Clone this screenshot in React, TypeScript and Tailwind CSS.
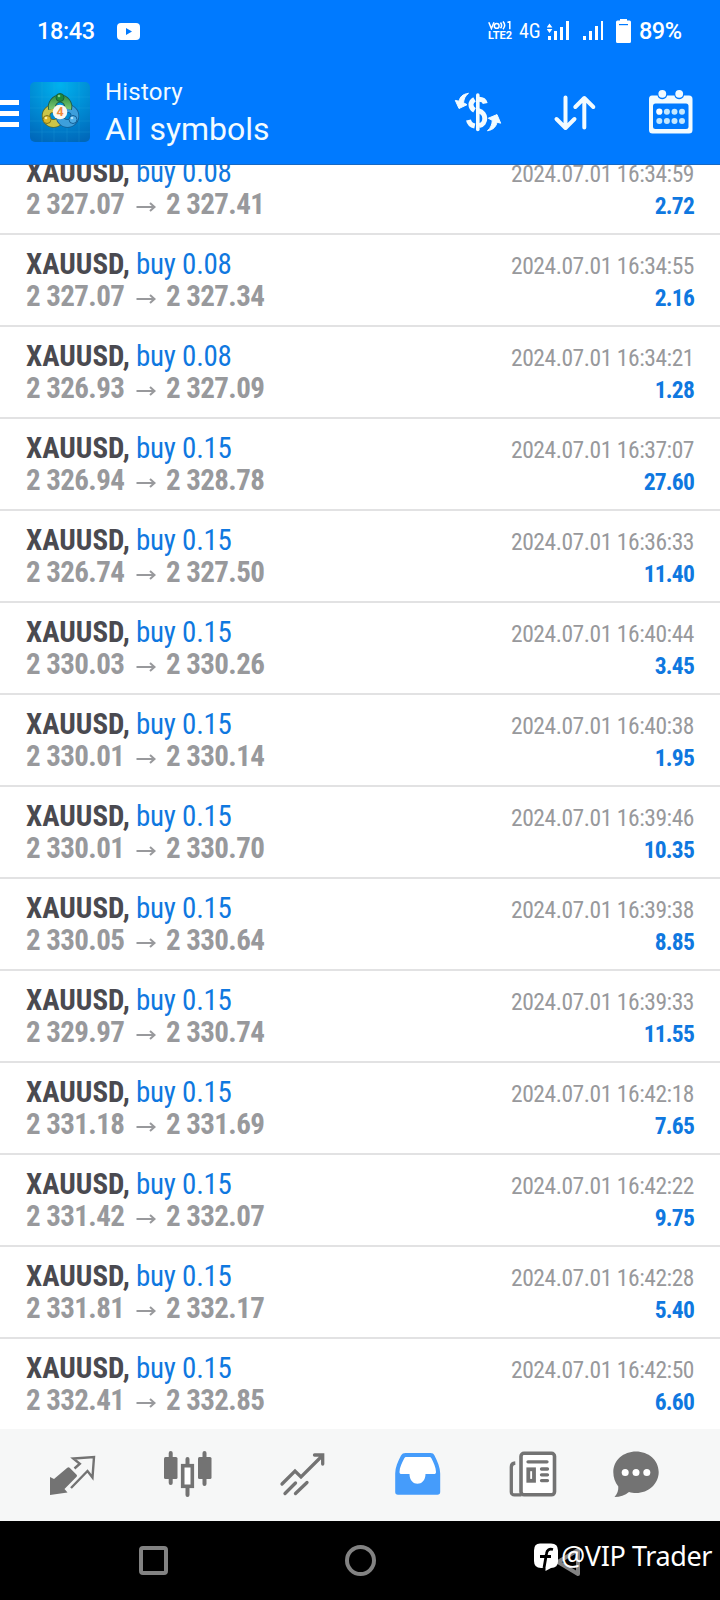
import type { ReactNode } from "react";

interface Deal {
  volume: string;
  open: string;
  close: string;
  time: string;
  profit: string;
}

const deals: Deal[] = [
  { volume: "0.08", open: "2 327.07", close: "2 327.41", time: "16:34:59", profit: "2.72" },
  { volume: "0.08", open: "2 327.07", close: "2 327.34", time: "16:34:55", profit: "2.16" },
  { volume: "0.08", open: "2 326.93", close: "2 327.09", time: "16:34:21", profit: "1.28" },
  { volume: "0.15", open: "2 326.94", close: "2 328.78", time: "16:37:07", profit: "27.60" },
  { volume: "0.15", open: "2 326.74", close: "2 327.50", time: "16:36:33", profit: "11.40" },
  { volume: "0.15", open: "2 330.03", close: "2 330.26", time: "16:40:44", profit: "3.45" },
  { volume: "0.15", open: "2 330.01", close: "2 330.14", time: "16:40:38", profit: "1.95" },
  { volume: "0.15", open: "2 330.01", close: "2 330.70", time: "16:39:46", profit: "10.35" },
  { volume: "0.15", open: "2 330.05", close: "2 330.64", time: "16:39:38", profit: "8.85" },
  { volume: "0.15", open: "2 329.97", close: "2 330.74", time: "16:39:33", profit: "11.55" },
  { volume: "0.15", open: "2 331.18", close: "2 331.69", time: "16:42:18", profit: "7.65" },
  { volume: "0.15", open: "2 331.42", close: "2 332.07", time: "16:42:22", profit: "9.75" },
  { volume: "0.15", open: "2 331.81", close: "2 332.17", time: "16:42:28", profit: "5.40" },
  { volume: "0.15", open: "2 332.41", close: "2 332.85", time: "16:42:50", profit: "6.60" },
];

function StatusBar() {
  return (
    <div className="flex h-[62px] items-center pl-[37px] text-white">
      <span className="w-[80px] text-[23.5px] font-medium leading-[62px] tracking-[-0.4px]">18:43</span>
      <svg className="h-[17px] w-[23px]" viewBox="0 0 23 17">
        <rect width="23" height="17" rx="4" fill="#fff" />
        <path d="M9 5v7l6-3.5z" fill="#007aff" />
      </svg>
      <div className="ml-[348px] flex w-[25px] flex-col">
        <svg className="h-[9px] w-[25px]" viewBox="0 0 25 9" fill="none" stroke="#fff" strokeWidth="1.5">
          <path d="M.8 1.2 3.4 7.6 6 1.2M12.5 1.5q2.2 2.9 0 5.8M15 .4q3.4 3.9 0 7.8M19.4 1.4l2.4-.8v7.6" />
          <circle cx="8.7" cy="4.9" r="2.4" />
        </svg>
        <span className="text-[11px] font-bold leading-[12px]">LTE2</span>
      </div>
      <span className="ml-[6px] w-[28px] text-[20px] leading-[60px] [font-stretch:78%]">4G</span>
      <svg className="h-[20px] w-[56px]" viewBox="0 0 56 20" fill="#fff">
        <path d="M2.5 2.5 5.4 6.5H-.4zM2.5 12 5.4 8H-.4z" />
        <path d="M1 15h3v4H1zM7 10h3v9H7zM13 6h3v13h-3zM19 0h3v19h-3z" />
        <path d="M36 15h3v4h-3zM42 10h3v9h-3zM48 5h3v14h-3zM54 0h3v19h-3z" />
      </svg>
      <svg className="ml-[13px] h-[24px] w-[15px]" viewBox="0 0 15 24">
        <path d="M4 0h7v1.5h2.5A1.5 1.5 0 0 1 15 3v19.5a1.5 1.5 0 0 1-1.5 1.5h-12A1.5 1.5 0 0 1 0 22.5V3a1.5 1.5 0 0 1 1.5-1.5H4z" fill="#fff" />
        <path d="M3 5h9v1.2H3z" fill="#007aff" />
      </svg>
      <span className="ml-[8px] text-[23.5px] font-medium leading-[62px] tracking-[-0.5px]">89%</span>
    </div>
  );
}

function AppLogo() {
  return (
    <svg className="ml-[11px] h-[60px] w-[60px]" viewBox="0 0 60 60">
      <defs>
        <radialGradient id="tile" cx=".5" cy=".05" r="1">
          <stop offset="0" stopColor="#00b2ee" />
          <stop offset=".6" stopColor="#0086d0" />
          <stop offset="1" stopColor="#0068ba" />
        </radialGradient>
        <linearGradient id="green" x2="0" y2="1">
          <stop stopColor="#3f9a4c" />
          <stop offset="1" stopColor="#7cc873" />
        </linearGradient>
      </defs>
      <rect width="60" height="60" rx="5" fill="url(#tile)" />
      <path d="M0 15h60M0 26h60M0 39h60M0 50h60M12 0v60M24 0v60M37 0v60M49 0v60" stroke="#37b5e8" strokeWidth=".6" opacity=".3" />
      <circle cx="23.5" cy="34" r="7.5" fill="none" stroke="#55662a" strokeWidth="8.5" />
      <circle cx="23.5" cy="34" r="7.5" fill="none" stroke="#cbc548" strokeWidth="6.8" />
      <circle cx="37.5" cy="34" r="7.5" fill="none" stroke="#125c94" strokeWidth="8.5" />
      <circle cx="37.5" cy="34" r="7.5" fill="none" stroke="#3d9fdc" strokeWidth="6.8" />
      <path d="M22.2 27A8.2 8.2 0 1 1 38 27" fill="none" stroke="#1d5b46" strokeWidth="8" />
      <path d="M22.2 27A8.2 8.2 0 1 1 38 27" fill="none" stroke="url(#green)" strokeWidth="6.2" />
      <circle cx="30" cy="15.5" r="4" fill="#1f8a3c" stroke="#17603a" />
      <circle cx="17" cy="37.5" r="4" fill="#d8b72a" stroke="#7e7622" />
      <circle cx="43" cy="37.5" r="4" fill="#4faee6" stroke="#125c94" />
      <circle cx="29" cy="14" r="1.3" fill="#7fd08a" />
      <circle cx="16" cy="36" r="1.3" fill="#fff0a0" />
      <circle cx="42" cy="36" r="1.3" fill="#b5e2fa" />
      <circle cx="30" cy="30" r="7.3" fill="#fbf8f2" />
      <text x="30" y="34.3" textAnchor="middle" fontSize="12.5" fontWeight="700" fill="#f08a3c">4</text>
    </svg>
  );
}

function Toolbar() {
  return (
    <div className="flex h-[103px] border-b border-[#1769c4] pt-[20px] text-[#f2fbff]">
      <div className="flex w-[19px] flex-col gap-[6px] pt-[18px]">
        <div className="h-[5px] bg-white" />
        <div className="h-[5px] bg-white" />
        <div className="h-[5px] bg-white" />
      </div>
      <AppLogo />
      <div className="ml-[15px] w-[348.5px]">
        <div className="-mt-[5px] text-[24px] leading-[30px] tracking-[0.2px]">History</div>
        <div className="mt-[2px] text-[32px] leading-[40px]">All symbols</div>
      </div>
      <svg className="mt-[9px] h-[42px] w-[48px]" viewBox="0 0 48 42" fill="none" stroke="currentColor">
        <path d="M23.8 4v34.5" strokeWidth="3.6" strokeLinecap="round" />
        <path d="M20.5 8.3C15.8 11 15.8 16.5 20.5 19.3M25 8.2c3.5 0 5.5 1.5 6.2 4.3M24.5 19.8c8.3 2 8.3 13.2.5 14.8M14.5 29c.6 3 3 5.3 6.3 6" strokeWidth="5" />
        <path d="M14.5 2.3C8.500 3.200 6 6 5 10.200L1.300 9.400 5 17.500l8-3.800-3.500-2c.4-3.800 1.700-6.800 5-9.400zM33.500 39.800c6-1 8.800-4.600 9.500-8.600l3.700 1-3.700-8.600-8.700 3.600 4 2.200c-.2 3.800-1.500 7.600-4.800 10.400z" fill="currentColor" strokeWidth="1" strokeLinejoin="round" />
      </svg>
      <svg className="ml-[51px] mt-[10.5px] h-[40px] w-[44px]" viewBox="0 0 44 40" fill="none" stroke="currentColor" strokeWidth="4" strokeLinecap="round" strokeLinejoin="round">
        <path d="M12.5 4.5v30M3.5 26l9 9 9-9M31.3 34.5V5M22.3 14l9-9 9 9" />
      </svg>
      <svg className="ml-[52px] mt-[7px] h-[46px] w-[44px]" viewBox="0 0 44 46">
        <path d="M3 6.5h5.5c1 5 8.6 5 9.6 0h7.3c1 5 8.6 5 9.6 0H40a3.5 3.5 0 0 1 3.5 3.5v31a3.5 3.5 0 0 1-3.500 3.500H3.500A3.500 3.500 0 0 1 0 41V10a3.500 3.500 0 0 1 3-3.500z" fill="currentColor" />
        <circle cx="13.3" cy="4.8" r="3.9" fill="currentColor" />
        <circle cx="30.2" cy="4.8" r="3.9" fill="currentColor" />
        <rect x="4" y="14.5" width="35.5" height="25.5" rx="2.5" fill="#007aff" />
        <g fill="#c4e8ff">
          <circle cx="10.3" cy="22.7" r="3.1" fill="#fff" />
          <circle cx="17.9" cy="22.7" r="3" />
          <circle cx="25.5" cy="22.7" r="3" />
          <circle cx="33" cy="22.7" r="3" />
          <circle cx="10.3" cy="32" r="3" />
          <circle cx="17.9" cy="32" r="3" />
          <circle cx="25.5" cy="32" r="3" />
          <circle cx="33" cy="32" r="3" />
        </g>
      </svg>
    </div>
  );
}

function DealRow({ deal }: { deal: Deal }) {
  return (
    <div className="flex h-[92px] shrink-0 justify-between border-b-2 border-[#e2e2e3] pl-[26px] pr-[26px] [font-stretch:75%]">
      <div className="pt-[13px] text-[29px] leading-[32px]">
        <div className="flex whitespace-pre">
          <span className="w-[110px] font-bold text-[#4a4a50]">XAUUSD,</span>
          <span className="tracking-[-0.25px] text-[#0f78e0]">buy {deal.volume}</span>
        </div>
        <div className="flex font-bold tracking-[-0.6px] text-[#98999c]">
          <span className="w-[109.5px]">{deal.open}</span>
          <svg className="mt-[13px] h-[12px] w-[30.5px]" viewBox="0 0 30.5 12" fill="none" stroke="currentColor" strokeWidth="2">
            <path d="M.5 6h18M14 2l4.500 4-4.500 4" />
          </svg>
          <span>{deal.close}</span>
        </div>
      </div>
      <div className="pt-[15px] text-right text-[23.5px] leading-[32px]">
        <div className="tracking-[-0.43px] text-[#98999c]">2024.07.01 {deal.time}</div>
        <div className="font-bold tracking-[-0.8px] text-[#0f78e0]">{deal.profit}</div>
      </div>
    </div>
  );
}

function TabIcon({ className, children }: { className: string; children: ReactNode }) {
  return (
    <svg className={className} viewBox="0 0 48 48" fill="none" stroke="currentColor" strokeWidth="3">
      {children}
    </svg>
  );
}

function TabBar() {
  return (
    <div className="flex h-[92px] shrink-0 bg-[#f6f7f7] pt-[21px] text-[#737373]">
      {/* Quotes */}
      <TabIcon className="ml-[48px] h-[48px] w-[48px]">
        <path d="M2 45V27l4 2L19.3 17.7q1.2-.9 2.3 0l7 7q.9 1 0 2L16.5 39l3 3.5z" fill="currentColor" stroke="none" />
        <path d="M26.5 18.5l5.3-4.8-6.5-5.2L46 7l-1.5 20.5-5-6.5L23 38" strokeWidth="2.4" />
      </TabIcon>
      {/* Charts */}
      <TabIcon className="ml-[68px] h-[48px] w-[48px]">
        <path d="M6.7 3v30M40.5 3v31M23.5 9v6M23.5 37v8" strokeWidth="4" strokeLinecap="round" />
        <rect x="0" y="7" width="13.5" height="22" rx="1.5" fill="currentColor" stroke="none" />
        <rect x="34" y="7" width="13.5" height="22" rx="1.5" fill="currentColor" stroke="none" />
        <rect x="18.7" y="15.7" width="9.6" height="20.6" fill="#fff" strokeWidth="3.6" />
      </TabIcon>
      {/* Trade */}
      <TabIcon className="ml-[66px] h-[48px] w-[48px]">
        <path d="M4 34l13-13 6 6L44 6M36.5 5h8.2v9M7 43.5L17.5 33M17.5 43.5L29 32.5" strokeWidth="3.3" strokeLinecap="round" />
      </TabIcon>
      {/* History */}
      <TabIcon className="ml-[67.5px] h-[48px] w-[48px] text-[#459cfb]">
        <path d="M11.5 3h25c2 0 3.3.8 4 2.5 3 6 5.7 12 5.7 18V42c0 1.8-1 2.8-2.8 2.8H4c-1.8 0-2.8-1-2.8-2.8V23.5c0-6 2.7-12 5.8-18C8 3.8 9.5 3 11.5 3z" fill="currentColor" stroke="none" />
        <path d="M12.5 7h22.7c1.2 0 1.7.3 2.2 1.3C39.5 12.5 42 17.5 42 22c0 1.5-.7 2-2 2h-8.5c0 13-16 13-16 0H7.5c-1.3 0-2-.5-2-2 0-4.5 2.7-9.5 4.8-13.7.5-1 1-1.3 2.2-1.3z" fill="#fff" stroke="none" />
      </TabIcon>
      {/* News */}
      <TabIcon className="ml-[67px] h-[48px] w-[48px]">
        <rect x="12" y="3.3" width="33.5" height="41.5" rx="3" fill="#fff" strokeWidth="3.6" />
        <path d="M12.5 44.9H5.5c-2 0-3.2-1-3.2-3V17c0-2.5 1-3.8 4-4" strokeWidth="3.3" />
        <path d="M19 11.8h19M32.5 19h6M32.5 24.8h6M32.5 30.6h6" strokeWidth="3.3" strokeLinecap="round" />
        <rect x="19.3" y="19.3" width="5.7" height="11.5" strokeWidth="3.8" />
      </TabIcon>
      {/* Messages */}
      <TabIcon className="ml-[55px] h-[48px] w-[48px]">
        <path d="M24 1.5c12.5 0 22.7 8.7 22.7 20.5S36.5 43 24 43c-2.7 0-4.5-.3-7-1-4 3.2-9 5-14.5 5 3-3.3 4-6.5 3.8-10.5C3 32.5 1.3 27.5 1.3 22 1.3 10.2 11.5 1.5 24 1.5z" fill="currentColor" stroke="none" />
        <g fill="#fff" stroke="none">
          <circle cx="13.2" cy="22.5" r="3.5" />
          <circle cx="24" cy="22.5" r="3.5" />
          <circle cx="34.8" cy="22.5" r="3.5" />
        </g>
      </TabIcon>
    </div>
  );
}

function SystemNav() {
  return (
    <div className="relative flex h-[79px] shrink-0 bg-black pt-[24px]">
      <div className="ml-[139px] mt-[1px] h-[29px] w-[29px] rounded-[4px] border-4 border-[#828282]" />
      <div className="ml-[177px] h-[31px] w-[31px] rounded-full border-4 border-[#828282]" />
      <svg className="ml-[177px] h-[32px] w-[30px]" viewBox="0 0 30 32" fill="none" stroke="#828282" strokeWidth="4" strokeLinejoin="round">
        <path d="M25 5v24L5 17z" />
      </svg>
      {/* Watermark */}
      <div className="absolute left-[533px] top-[20px] flex items-center text-white">
        <svg className="h-[30px] w-[26px]" viewBox="0 0 26 30">
          <path d="M7 2.5h11q7 0 7 7v11q0 6-7 6.500L12.500 30v-3H8q-7 0-7-7V9.500q0-7 6-7z" fill="#fff" />
          <path d="M20 8.500c-4-1-6 .5-6.500 4L11 27M7 15.500h11" fill="none" stroke="#000" strokeWidth="2.8" />
        </svg>
        <span className="ml-[2px] whitespace-nowrap font-['Noto_Sans',sans-serif] text-[27px] leading-[30px] tracking-[-0.4px]">@VIP Trader</span>
      </div>
    </div>
  );
}

export default function App() {
  return (
    <div className="flex h-[1600px] w-[720px] flex-col overflow-hidden bg-white font-['Roboto',sans-serif]">
      <header className="h-[165px] shrink-0 bg-[#007aff]">
        <StatusBar />
        <Toolbar />
      </header>
      {/* List is scrolled a little, so both ends are cut */}
      <main className="flex h-[1264px] shrink-0 flex-col overflow-hidden">
        <div className="-mt-[22px] flex flex-col">
          {deals.map((deal) => (
            <DealRow key={deal.time} deal={deal} />
          ))}
        </div>
      </main>
      <TabBar />
      <SystemNav />
    </div>
  );
}
